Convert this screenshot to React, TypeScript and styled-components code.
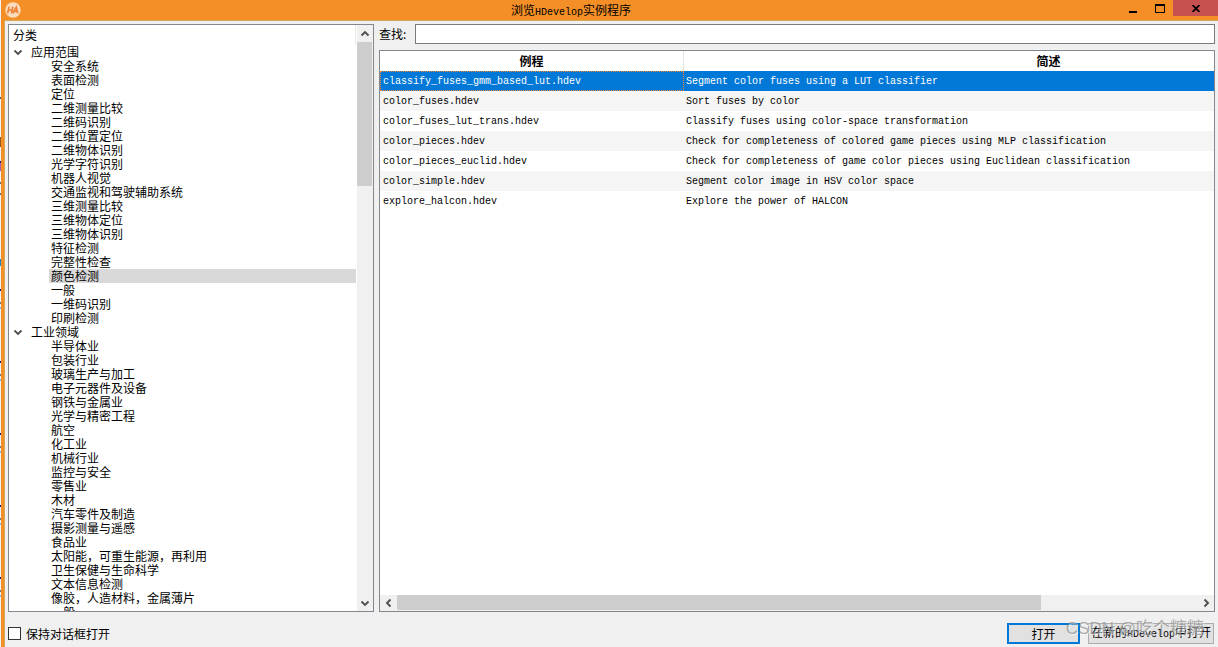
import React, { useState } from "react";
import styled, { createGlobalStyle, css } from "styled-components";

const cjk = `"Noto Sans CJK SC", sans-serif`;

const GlobalStyle = createGlobalStyle`
  *, *::before, *::after { box-sizing: border-box; }
  body { margin: 0; background: #f0f0f0; color: #000; font: 12px/14px ${cjk}; }
  button, input { font: inherit; color: inherit; }
`;

const Screen = styled.div`
  position: relative;
  display: flex;
  height: 100vh;
  overflow: hidden;
`;

const Backdrop = styled.div`
  position: relative;
  flex: none;
  width: 1px;
  background: #eef3f6;
`;

const BackdropMark = styled.i<{ $top: number; $height: number; $color: string }>`
  position: absolute;
  left: 0;
  top: ${(p) => p.$top}px;
  width: 1px;
  height: ${(p) => p.$height}px;
  background: ${(p) => p.$color};
`;

const Window = styled.main`
  flex: 1;
  min-width: 0;
  display: flex;
  flex-direction: column;
  border-left: 3px solid #f38f26;
  background: #f0f0f0;
`;

const TitleBar = styled.header`
  flex: none;
  display: grid;
  grid-template-columns: 1fr auto 1fr;
  height: 21px;
  background: #f38f26;
  border-bottom: 1px solid #d3a95c;
`;

const AppIcon = styled.svg`
  width: 16px;
  height: 16px;
  margin: 2px 0 0 1px;
`;

const Title = styled.h1`
  margin: 0;
  padding-right: 80px;
  font-size: 12px;
  font-weight: 400;
  line-height: 20px;
`;

const Latin = styled.span`
  font-family: "Liberation Mono", monospace;
  font-size: 10px;
`;

const WindowControls = styled.div`
  display: flex;
  justify-content: flex-end;
  align-items: flex-start;
`;

const ControlButton = styled.button<{ $close?: boolean }>`
  display: flex;
  align-items: center;
  justify-content: center;
  width: ${(p) => (p.$close ? 45 : 27)}px;
  height: 16px;
  padding: 0;
  border: 0;
  background: ${(p) => (p.$close ? "#c75050" : "transparent")};
`;

const Body = styled.div`
  flex: 1;
  min-height: 0;
  display: flex;
  gap: 5px;
  padding: 3px 3px 0;
  border-left: 1px solid #d3a95c;
`;

const TreePanel = styled.nav`
  flex: 0 0 366px;
  display: flex;
  border: 1px solid #828790;
  background: #fff;
`;

const TreeView = styled.div`
  flex: 1;
  min-width: 0;
  overflow: hidden;
`;

const TreeHeader = styled.div`
  height: 20px;
  padding-left: 4px;
  line-height: 20px;
  border-right: 1px solid #e5e5e5;
`;

const List = styled.ul`
  margin: 0;
  padding: 0;
  list-style: none;
`;

const Branch = styled.button`
  display: flex;
  align-items: center;
  gap: 8px;
  height: 14px;
  padding: 0 0 0 4px;
  border: 0;
  background: none;
  line-height: 14px;
`;

const Leaf = styled.li<{ $selected: boolean }>`
  height: 14px;
  margin: 0 0 0 40px;
  padding-left: 2px;
  white-space: nowrap;
  background: ${(p) => (p.$selected ? "#d9d9d9" : "transparent")};
`;

const ScrollTrack = styled.div<{ $horizontal?: boolean }>`
  flex: none;
  display: flex;
  background: #f0f0f0;
  ${(p) =>
    p.$horizontal
      ? css`
          height: 16px;
          border-bottom: 1px solid #f0f0f0;
        `
      : css`
          width: 17px;
          flex-direction: column;
          border-left: 1px solid #fff;
          border-right: 1px solid #f0f0f0;
        `}
`;

const ScrollButton = styled.button`
  flex: none;
  display: flex;
  align-items: center;
  justify-content: center;
  width: 17px;
  height: 17px;
  max-width: 100%;
  max-height: 100%;
  padding: 0;
  border: 0;
  background: none;
`;

const ScrollRoom = styled.div<{ $horizontal?: boolean }>`
  flex: 1;
  display: flex;
  flex-direction: ${(p) => (p.$horizontal ? "row" : "column")};
`;

const ScrollThumb = styled.div<{ $share: number }>`
  flex: 0 0 ${(p) => p.$share}%;
  background: #cdcdcd;
`;

const Content = styled.section`
  flex: 1;
  min-width: 0;
  display: flex;
  flex-direction: column;
  gap: 6px;
`;

const SearchRow = styled.div`
  display: flex;
  align-items: center;
  height: 20px;
`;

const SearchLabel = styled.label`
  width: 36px;
`;

const SearchInput = styled.input`
  flex: 1;
  min-width: 0;
  height: 20px;
  padding: 0 4px;
  border: 1px solid #7a7a7a;
  background: #fff;
  outline: 0;
`;

const TablePanel = styled.div`
  flex: 1;
  min-height: 0;
  display: flex;
  flex-direction: column;
  border: 1px solid #828790;
  background: #fff;
`;

const TableView = styled.div`
  flex: 1;
  min-height: 0;
  overflow: hidden;
`;

const Table = styled.table`
  width: 124%;
  table-layout: fixed;
  border-collapse: separate;
  border-spacing: 0;
`;

const HeadCell = styled.th<{ $name?: boolean }>`
  width: ${(p) => (p.$name ? "304px" : "auto")};
  height: 20px;
  padding: 0;
  line-height: 20px;
  font-weight: 700;
  border-right: 1px solid #e5e5e5;
`;

const Cell = styled.td`
  height: 20px;
  padding: 1px 2px 0 3px;
  font: 10px/19px "Liberation Mono", monospace;
  white-space: nowrap;

  & + & {
    padding-left: 2px;
  }
`;

const Row = styled.tr<{ $selected: boolean }>`
  &:nth-child(even) {
    background: #f5f5f5;
  }
  ${(p) =>
    p.$selected &&
    css`
      background: #0078d7;
      color: #fff;
      td:first-child {
        outline: 1px dotted #ff8728;
        outline-offset: -1px;
      }
    `}
`;

const Footer = styled.footer`
  flex: none;
  display: flex;
  align-items: center;
  justify-content: space-between;
  height: 35px;
  padding: 8px 4px 0 3px;
  border-left: 1px solid #d3a95c;
`;

const KeepOpen = styled.label`
  display: flex;
  align-items: center;
  gap: 5px;
  height: 16px;
  line-height: 12px;
`;

const CheckBox = styled.input`
  appearance: none;
  width: 13px;
  height: 13px;
  margin: 0;
  border: 1px solid #333;
  background: #fff;
  &:checked {
    box-shadow: inset 0 0 0 2px #fff;
    background: #333;
  }
`;

const Actions = styled.div`
  display: flex;
  gap: 8px;
`;

const PushButton = styled.button<{ $primary?: boolean }>`
  width: ${(p) => (p.$primary ? 73 : 126)}px;
  height: 21px;
  padding: 0;
  border: ${(p) => (p.$primary ? "2px solid #0078d7" : "1px solid #adadad")};
  background: #e1e1e1;
  line-height: 16px;
  white-space: nowrap;
`;

const Watermark = styled.div`
  position: absolute;
  right: 14px;
  bottom: 8px;
  font: 17px/20px "Liberation Sans", ${cjk};
  color: rgba(130, 130, 130, 0.65);
  text-shadow: 1px 1px 1px rgba(255, 255, 255, 0.6);
  pointer-events: none;
`;

type Direction = "up" | "down" | "left" | "right";
const chevrons: Record<Direction, string> = {
  up: "M1.5 6.5 5 3l3.5 3.5",
  down: "M1.5 3.5 5 7l3.5-3.5",
  left: "M6.5 1.5 3 5l3.5 3.5",
  right: "M3.5 1.5 7 5 3.5 8.5",
};

const Chevron = ({ to }: { to: Direction }) => (
  <svg width="10" height="10" viewBox="0 0 10 10" fill="none" stroke="#505050" strokeWidth="1.9" aria-hidden="true">
    <path d={chevrons[to]} />
  </svg>
);

const categories = [
  {
    name: "应用范围",
    items: ["安全系统", "表面检测", "定位", "二维测量比较", "二维码识别", "二维位置定位", "二维物体识别", "光学字符识别", "机器人视觉", "交通监视和驾驶辅助系统", "三维测量比较", "三维物体定位", "三维物体识别", "特征检测", "完整性检查", "颜色检测", "一般", "一维码识别", "印刷检测"],
  },
  {
    name: "工业领域",
    items: ["半导体业", "包装行业", "玻璃生产与加工", "电子元器件及设备", "钢铁与金属业", "光学与精密工程", "航空", "化工业", "机械行业", "监控与安全", "零售业", "木材", "汽车零件及制造", "摄影测量与遥感", "食品业", "太阳能，可重生能源，再利用", "卫生保健与生命科学", "文本信息检测", "像胶，人造材料，金属薄片", "一般"],
  },
];

const examples = [
  ["classify_fuses_gmm_based_lut.hdev", "Segment color fuses using a LUT classifier"],
  ["color_fuses.hdev", "Sort fuses by color"],
  ["color_fuses_lut_trans.hdev", "Classify fuses using color-space transformation"],
  ["color_pieces.hdev", "Check for completeness of colored game pieces using MLP classification"],
  ["color_pieces_euclid.hdev", "Check for completeness of game color pieces using Euclidean classification"],
  ["color_simple.hdev", "Segment color image in HSV color space"],
  ["explore_halcon.hdev", "Explore the power of HALCON"],
];

// Slivers of the editor window that lies behind the dialog: top, height, colour.
const backdropMarks: [number, number, string][] = [
  [97, 2, "#556"],
  [137, 10, "#9a5a1c"],
  [161, 2, "#119"],
  [163, 8, "#b060b0"],
  [182, 2, "#667"],
  [193, 2, "#667"],
  [259, 7, "#1a86c8"],
  ...[289, 361, 433, 505, 577].flatMap((top): [number, number, string][] => [
    [top, 2, "#119"],
    [top + 13, 2, "#778"],
    [top + 18, 2, "#8ab8e8"],
  ]),
];

export default function App() {
  const [category, setCategory] = useState("0-15");
  const [selected, setSelected] = useState(0);

  return (
    <Screen>
      <GlobalStyle />
      <Backdrop>
        {backdropMarks.map(([top, height, color]) => (
          <BackdropMark key={top} $top={top} $height={height} $color={color} />
        ))}
      </Backdrop>
      <Window>
        <TitleBar>
          <AppIcon viewBox="0 0 16 16" aria-hidden="true">
            <circle cx="8" cy="8" r="7.7" fill="#f9dcbc" />
            <path d="M2.6 11.2 4.1 4.8M6.4 11.2 7.9 4.8M3.5 8h3.6M7.8 11.2l3.5-6 1.5 6M9.4 9.3h3" fill="none" stroke="#ee8438" strokeWidth="1.7" />
          </AppIcon>
          <Title>浏览<Latin>HDevelop</Latin>实例程序</Title>
          <WindowControls>
            <ControlButton aria-label="最小化">
              <svg width="10" height="10"><path d="M1 8h8v2H1z" /></svg>
            </ControlButton>
            <ControlButton aria-label="最大化">
              <svg width="10" height="9"><path d="M.5 1v7.5h9V1" fill="none" stroke="#000" /><path d="M0 0h10v2H0z" /></svg>
            </ControlButton>
            <ControlButton $close aria-label="关闭">
              <svg width="8" height="7"><path d="M.5 0 7.5 7M7.5 0 .5 7" stroke="#000" strokeWidth="1.7" /></svg>
            </ControlButton>
          </WindowControls>
        </TitleBar>

        <Body>
          <TreePanel aria-label="分类">
            <TreeView>
              <TreeHeader>分类</TreeHeader>
              <List>
                {categories.map((group, g) => (
                  <li key={group.name}>
                    <Branch><Chevron to="down" />{group.name}</Branch>
                    <List>
                      {group.items.map((item, i) => (
                        <Leaf key={item} $selected={category === `${g}-${i}`} onClick={() => setCategory(`${g}-${i}`)}>
                          {item}
                        </Leaf>
                      ))}
                    </List>
                  </li>
                ))}
              </List>
            </TreeView>
            <ScrollTrack>
              <ScrollButton aria-label="向上滚动"><Chevron to="up" /></ScrollButton>
              <ScrollRoom><ScrollThumb $share={26} /></ScrollRoom>
              <ScrollButton aria-label="向下滚动"><Chevron to="down" /></ScrollButton>
            </ScrollTrack>
          </TreePanel>

          <Content>
            <SearchRow>
              <SearchLabel htmlFor="search">查找:</SearchLabel>
              <SearchInput id="search" type="text" />
            </SearchRow>
            <TablePanel>
              <TableView>
                <Table>
                  <thead>
                    <tr>
                      <HeadCell $name>例程</HeadCell>
                      <HeadCell>简述</HeadCell>
                    </tr>
                  </thead>
                  <tbody>
                    {examples.map(([file, description], i) => (
                      <Row key={file} $selected={selected === i} onClick={() => setSelected(i)}>
                        <Cell>{file}</Cell>
                        <Cell>{description}</Cell>
                      </Row>
                    ))}
                  </tbody>
                </Table>
              </TableView>
              <ScrollTrack $horizontal>
                <ScrollButton aria-label="向左滚动"><Chevron to="left" /></ScrollButton>
                <ScrollRoom $horizontal><ScrollThumb $share={80.5} /></ScrollRoom>
                <ScrollButton aria-label="向右滚动"><Chevron to="right" /></ScrollButton>
              </ScrollTrack>
            </TablePanel>
          </Content>
        </Body>

        <Footer>
          <KeepOpen>
            <CheckBox type="checkbox" />
            保持对话框打开
          </KeepOpen>
          <Actions>
            <PushButton $primary>打开</PushButton>
            <PushButton>在新的<Latin>HDevelop</Latin>中打开</PushButton>
          </Actions>
        </Footer>
      </Window>
      <Watermark>CSDN @吃个糖糖</Watermark>
    </Screen>
  );
}
